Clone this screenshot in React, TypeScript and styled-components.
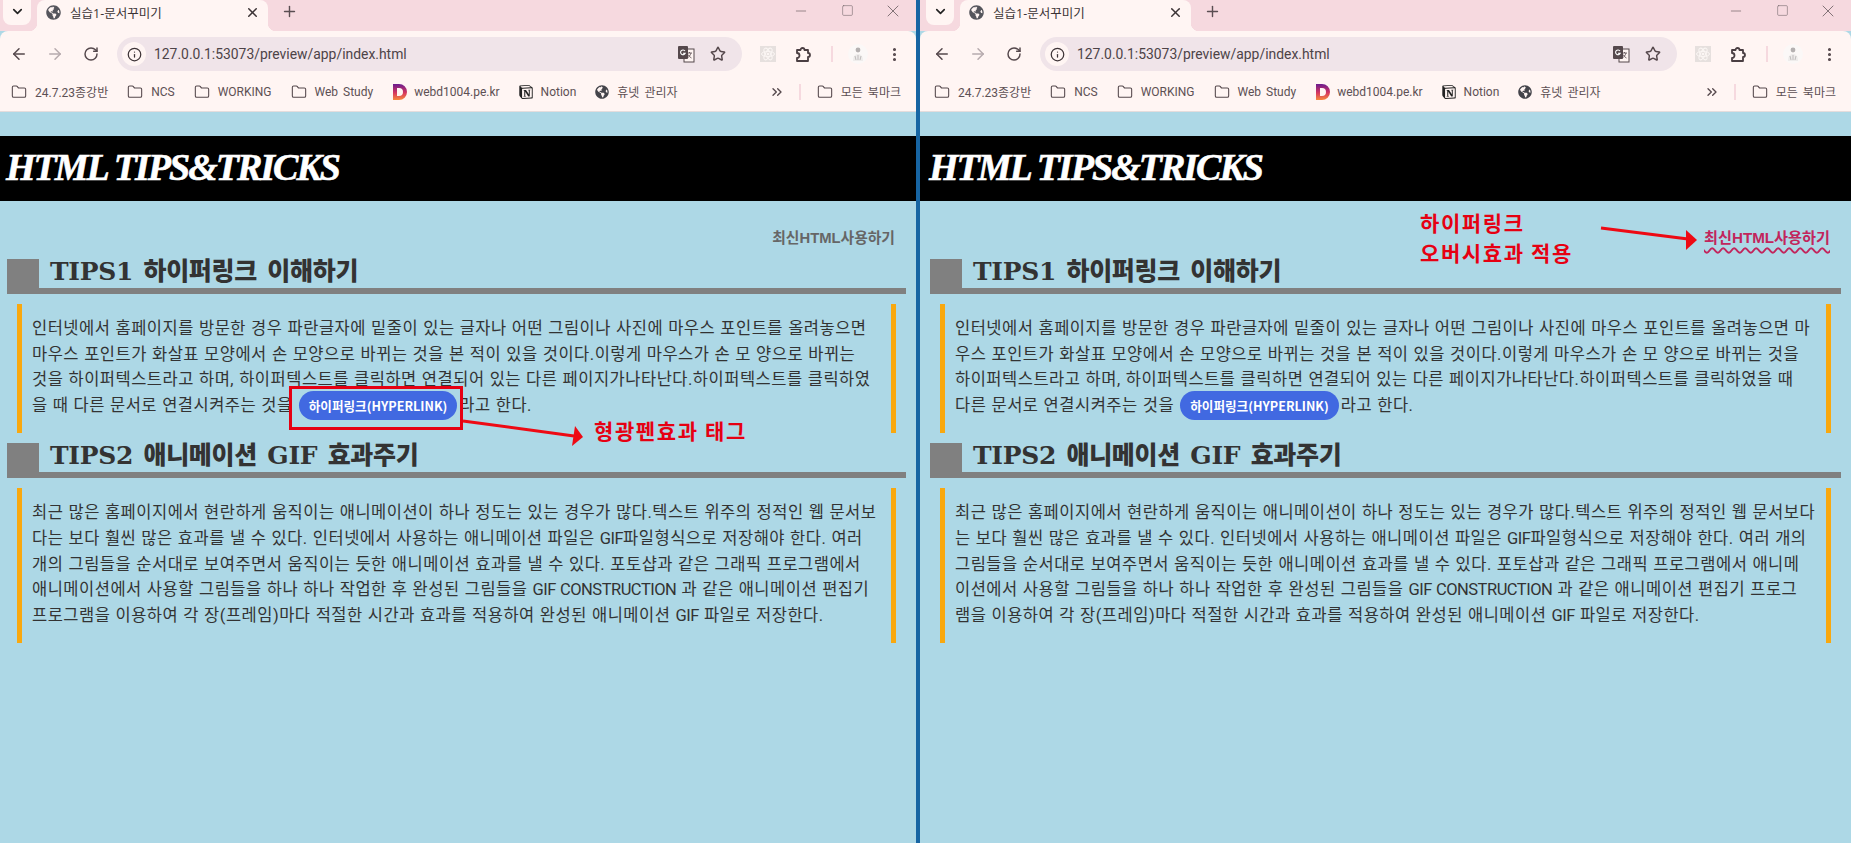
import React from "react";
import styled, { createGlobalStyle } from "styled-components";
import {
  ArrowLeft,
  ArrowRight,
  ChevronDown,
  ChevronsRight,
  EllipsisVertical,
  Folder,
  Info,
  Minus,
  Plus,
  RotateCw,
  Square,
  Star,
  X,
} from "lucide-react";
import { FaGlobeAmericas } from "react-icons/fa";
import { SiNotion } from "react-icons/si";

const GlobalStyle = createGlobalStyle`
  html, body {
    margin: 0;
    height: 100%;
    overflow: hidden;
  }
  #root {
    height: 100%;
  }
`;

const UI_FONT = `Roboto, "Noto Sans CJK KR", sans-serif`;
const BODY_FONT = `"Noto Sans CJK KR", "Noto Sans", sans-serif`;

const Screen = styled.div`
  display: flex;
  height: 843px;
  width: 1851px;
  background: #1765a3;
`;

const Window = styled.div<{ $width: number; $gapLeft?: number }>`
  position: relative;
  display: flex;
  flex-direction: column;
  width: ${({ $width }) => $width}px;
  margin-left: ${({ $gapLeft }) => $gapLeft ?? 0}px;
  background: #add8e6;
  overflow: hidden;
`;

const TabStrip = styled.div<{ $inset: number }>`
  display: flex;
  align-items: flex-start;
  height: 31px;
  padding-left: ${({ $inset }) => 3 + $inset}px;
  background: #f6d9df;
  color: #2f2a2c;
`;

const TabSearch = styled.div`
  display: flex;
  align-items: center;
  justify-content: center;
  width: 28px;
  height: 25px;
  padding-bottom: 2px;
  box-sizing: border-box;
  border-radius: 0 0 8px 8px;
  background: #fff5f3;
`;

const Tab = styled.div`
  position: relative;
  display: flex;
  align-items: center;
  width: 231px;
  height: 31px;
  margin-left: 6px;
  padding: 0 8px 7px 9px;
  box-sizing: border-box;
  border-radius: 8px 8px 0 0;
  background: #fff5f3;
  font: 12.5px "Open Sans", "Noto Sans CJK KR", sans-serif;
  color: #3b3335;

  &::before,
  &::after {
    content: "";
    position: absolute;
    bottom: 0;
    width: 8px;
    height: 8px;
  }
  &::before {
    left: -8px;
    background: radial-gradient(circle at 0 0, transparent 8px, #fff5f3 8.5px);
  }
  &::after {
    right: -8px;
    background: radial-gradient(circle at 100% 0, transparent 8px, #fff5f3 8.5px);
  }
`;

const TabGlobe = styled(FaGlobeAmericas)`
  width: 15px;
  height: 15px;
  color: #55555c;
  flex: none;
`;

const TabTitle = styled.span`
  margin-left: 9px;
  flex: 1;
  white-space: nowrap;
`;

const NewTab = styled.div`
  display: flex;
  margin: 3px 0 0 13px;
  color: #5a4e52;
`;

const WindowControls = styled.div`
  display: flex;
  margin-left: auto;
  height: 21px;
`;

const WindowButton = styled.div`
  display: flex;
  align-items: center;
  justify-content: center;
  width: 46px;
  color: #6b5e62;
`;

const Toolbar = styled.div<{ $inset: number }>`
  display: flex;
  align-items: center;
  height: 44px;
  box-sizing: border-box;
  padding: 2px 4px 0 ${({ $inset }) => 1 + $inset}px;
  background: #fff5f3;
  border-radius: 8px 8px 0 0;
  color: #55484c;
`;

const NavButton = styled.div<{ $muted?: boolean }>`
  display: flex;
  align-items: center;
  justify-content: center;
  width: 36px;
  flex: none;
  color: ${({ $muted }) => ($muted ? "#b7abae" : "#55484c")};
`;

const Omnibox = styled.div`
  display: flex;
  align-items: center;
  flex: 1;
  height: 34px;
  margin: 0 8px;
  padding: 0 8px 0 5px;
  border-radius: 17px;
  background: #f0e4e9;
`;

const SiteInfo = styled.div`
  display: flex;
  align-items: center;
  justify-content: center;
  width: 24px;
  height: 24px;
  border-radius: 50%;
  background: #fff5f3;
  color: #3e3437;
`;

const Url = styled.span`
  margin-left: 8px;
  flex: 1;
  font: 13.9px Roboto, sans-serif;
  color: #4d4347;
`;

const OmniIcon = styled.div`
  display: flex;
  align-items: center;
  justify-content: center;
  width: 32px;
`;

const ToolbarDivider = styled.div`
  width: 2px;
  height: 16px;
  margin: 0 7px 0 9px;
  background: #f6d9df;
`;

const Bookmarks = styled.div<{ $inset: number }>`
  display: flex;
  align-items: center;
  gap: 19px;
  height: 37px;
  box-sizing: border-box;
  padding: 0 15px 3px ${({ $inset }) => 11 + $inset}px;
  background: #fff5f3;
  border-bottom: 1px solid #e4dcdc;
  font: 12px ${UI_FONT};
  word-spacing: 2px;
  color: #5d5054;
`;

const Bookmark = styled.div<{ $tight?: boolean }>`
  display: flex;
  align-items: center;
  gap: ${({ $tight }) => ($tight ? 6 : 8)}px;
  white-space: nowrap;
`;

const OtherBookmarks = styled.div`
  display: flex;
  align-items: center;
  margin-left: auto;
`;

const BookmarkDivider = styled.div`
  width: 2px;
  height: 16px;
  margin: 0 16px 0 14px;
  background: #f6d9df;
`;

const TitleBar = styled.h1<{ $inset: number }>`
  margin: 24px 0 0;
  height: 65px;
  padding-left: ${({ $inset }) => 6 + $inset}px;
  background: #000;
  color: #fff;
  font: italic 700 38px/63px "Liberation Serif", serif;
  letter-spacing: -2px;
  -webkit-text-stroke: 0.6px #fff;
  white-space: nowrap;
`;

const Content = styled.div<{ $inset: number }>`
  display: flex;
  flex-direction: column;
  padding: 0 10px 0 ${({ $inset }) => 7 + $inset}px;
`;

const TopLink = styled.a<{ $hover?: boolean }>`
  align-self: flex-end;
  margin: 26px 11px 10px 0;
  font: 700 ${({ $hover }) => ($hover ? 15.2 : 14.8)}px/22px "Liberation Sans", ${BODY_FONT};
  color: ${({ $hover }) => ($hover ? "#c2255c" : "#666")};
  text-decoration: ${({ $hover }) => ($hover ? "underline wavy" : "none")};
  text-decoration-thickness: 1.8px;
  text-underline-offset: 4px;
`;

const SectionTitle = styled.h2`
  display: flex;
  align-items: flex-start;
  height: 29px;
  margin: 0;
  border-bottom: 6px solid #808080;
  font: 900 25px/25px "DejaVu Serif", ${BODY_FONT};
  letter-spacing: -0.3px;
  word-spacing: 2px;
  color: #333;
  white-space: nowrap;

  &::before {
    content: "";
    width: 32px;
    height: 29px;
    margin-right: 11px;
    background: #808080;
    flex: none;
  }
`;

const Paragraph = styled.p`
  margin: 10px 10px;
  padding: 12px 10px 15px;
  border-left: 5px solid #f9a80e;
  border-right: 5px solid #f9a80e;
  font: 400 16.5px/25.6px Roboto, ${BODY_FONT};
  letter-spacing: 0.5px;
  word-spacing: 0.5px;
  color: #333;
  white-space: nowrap;
`;

const Latin = styled.span`
  letter-spacing: -0.5px;
`;

const Pill = styled.span`
  margin: 0 2px 0 1px;
  padding: 5px 10px;
  border-radius: 15px;
  background: #4169e1;
  color: #fff;
  font: 700 12.6px/1 ${BODY_FONT};
  letter-spacing: 0;
`;

const Callout = styled.div<{ $x: number; $y: number }>`
  position: absolute;
  left: ${({ $x }) => $x}px;
  top: ${({ $y }) => $y}px;
  font: 700 21px/30px ${BODY_FONT};
  letter-spacing: 1.6px;
  color: #e60012;
  white-space: nowrap;
`;

const Highlight = styled.div`
  position: absolute;
  left: 289px;
  top: 386px;
  width: 168px;
  height: 38px;
  border: 3px solid #e60012;
`;

const ArrowSvg = styled.svg`
  position: absolute;
  left: 0;
  top: 0;
  pointer-events: none;
`;

const TranslateIcon = () => (
  <svg width="18" height="18" viewBox="0 0 18 18">
    <rect x="7" y="4" width="10" height="13" fill="#fff5f3" stroke="#55484c" strokeWidth="1" />
    <path d="M10 8h5M12.5 7v1M14 8c-.6 2.4-2 4-4 5M11 9.5c.8 1.6 2 2.8 3.5 3.5" fill="none" stroke="#55484c" strokeWidth="0.8" />
    <rect x="1" y="1" width="10" height="13" rx="1" fill="#55484c" />
    <path d="M8 6a2.4 2.4 0 1 0 .2 2.3H6" fill="none" stroke="#fff" strokeWidth="1.1" />
  </svg>
);

const AtomIcon = () => (
  <svg width="16" height="16" viewBox="0 0 16 16">
    <rect width="16" height="16" fill="#e6e0de" />
    <g fill="none" stroke="#fbf6f4" strokeWidth="1">
      <ellipse cx="8" cy="8" rx="6.5" ry="2.6" />
      <ellipse cx="8" cy="8" rx="6.5" ry="2.6" transform="rotate(60 8 8)" />
      <ellipse cx="8" cy="8" rx="6.5" ry="2.6" transform="rotate(120 8 8)" />
    </g>
    <circle cx="8" cy="8" r="1.3" fill="#fbf6f4" />
  </svg>
);

const PuzzleIcon = () => (
  <svg width="18" height="18" viewBox="0 0 18 18">
    <path
      d="M2 5h3.5a2 2 0 0 1 4 0H13v3a2 2 0 0 1 0 4v4H2v-3a2 2 0 0 0 0-5z"
      fill="none"
      stroke="#4a3e42"
      strokeWidth="1.8"
      strokeLinejoin="round"
    />
  </svg>
);

const AvatarIcon = () => (
  <svg width="20" height="20" viewBox="0 0 20 20">
    <circle cx="10" cy="10" r="10" fill="#fbf8f7" />
    <circle cx="10" cy="6" r="2.4" fill="#b4b0b0" />
    <path d="M5 17c0-5 2-7 5-7s5 2 5 7z" fill="#eeeceb" />
    <path d="M7 12l1 4M10 11v5M13 12l-1 4" stroke="#b4b0b0" strokeWidth="0.8" />
  </svg>
);

const DLogo = () => (
  <svg width="16" height="16" viewBox="0 0 16 16">
    <defs>
      <linearGradient id="dlogo" x1="0" y1="0" x2="0" y2="1">
        <stop offset="0" stopColor="#6a1b8f" />
        <stop offset="0.55" stopColor="#d6365f" />
        <stop offset="1" stopColor="#f68a3c" />
      </linearGradient>
    </defs>
    <path fillRule="evenodd" d="M1 0h6a8 8 0 0 1 0 16H1zM5 4v8h2a4 4 0 0 0 0-8z" fill="url(#dlogo)" />
  </svg>
);

const FolderIcon = () => <Folder size={16} strokeWidth={1.6} color="#55484c" />;

const BookmarkBar: React.FC<{ inset: number }> = ({ inset }) => (
  <Bookmarks $inset={inset}>
    <Bookmark><FolderIcon />24.7.23종강반</Bookmark>
    <Bookmark><FolderIcon />NCS</Bookmark>
    <Bookmark><FolderIcon />WORKING</Bookmark>
    <Bookmark><FolderIcon />Web Study</Bookmark>
    <Bookmark $tight><DLogo />webd1004.pe.kr</Bookmark>
    <Bookmark><SiNotion size={14} color="#222" />Notion</Bookmark>
    <Bookmark><FaGlobeAmericas size={14} color="#44444a" />휴넷 관리자</Bookmark>
    <OtherBookmarks>
      <ChevronsRight size={16} color="#55484c" />
      <BookmarkDivider />
      <Bookmark><FolderIcon />모든 북마크</Bookmark>
    </OtherBookmarks>
  </Bookmarks>
);

const BrowserFrame: React.FC<{ inset: number }> = ({ inset }) => (
  <>
    <TabStrip $inset={inset}>
      <TabSearch><ChevronDown size={15} strokeWidth={2.6} color="#222" /></TabSearch>
      <Tab>
        <TabGlobe />
        <TabTitle>실습1-문서꾸미기</TabTitle>
        <X size={15} strokeWidth={2.4} color="#3b3335" />
      </Tab>
      <NewTab><Plus size={17} strokeWidth={2} /></NewTab>
      <WindowControls>
        <WindowButton><Minus size={16} strokeWidth={1} /></WindowButton>
        <WindowButton><Square size={13} strokeWidth={1} /></WindowButton>
        <WindowButton><X size={20} strokeWidth={1} /></WindowButton>
      </WindowControls>
    </TabStrip>
    <Toolbar $inset={inset}>
      <NavButton><ArrowLeft size={18} /></NavButton>
      <NavButton $muted><ArrowRight size={18} /></NavButton>
      <NavButton><RotateCw size={16} strokeWidth={2.2} /></NavButton>
      <Omnibox>
        <SiteInfo><Info size={15} strokeWidth={2} /></SiteInfo>
        <Url>127.0.0.1:53073/preview/app/index.html</Url>
        <OmniIcon><TranslateIcon /></OmniIcon>
        <OmniIcon><Star size={16} strokeWidth={2.2} /></OmniIcon>
      </Omnibox>
      <NavButton><AtomIcon /></NavButton>
      <NavButton><PuzzleIcon /></NavButton>
      <ToolbarDivider />
      <NavButton><AvatarIcon /></NavButton>
      <NavButton><EllipsisVertical size={17} strokeWidth={2.4} /></NavButton>
    </Toolbar>
    <BookmarkBar inset={inset} />
  </>
);

const HYPERLINK = "하이퍼링크(HYPERLINK)";

const LEFT_TIP1 = [
  "인터넷에서 홈페이지를 방문한 경우 파란글자에 밑줄이 있는 글자나 어떤 그림이나 사진에 마우스 포인트를 올려놓으면",
  "마우스 포인트가 화살표 모양에서 손 모양으로 바뀌는 것을 본 적이 있을 것이다.이렇게 마우스가 손 모 양으로 바뀌는",
  "것을 하이퍼텍스트라고 하며, 하이퍼텍스트를 클릭하면 연결되어 있는 다른 페이지가나타난다.하이퍼텍스트를 클릭하였",
];
const LEFT_TIP1_END = "을 때 다른 문서로 연결시켜주는 것을 ";

const RIGHT_TIP1 = [
  "인터넷에서 홈페이지를 방문한 경우 파란글자에 밑줄이 있는 글자나 어떤 그림이나 사진에 마우스 포인트를 올려놓으면 마",
  "우스 포인트가 화살표 모양에서 손 모양으로 바뀌는 것을 본 적이 있을 것이다.이렇게 마우스가 손 모 양으로 바뀌는 것을",
  "하이퍼텍스트라고 하며, 하이퍼텍스트를 클릭하면 연결되어 있는 다른 페이지가나타난다.하이퍼텍스트를 클릭하였을 때",
];
const RIGHT_TIP1_END = "다른 문서로 연결시켜주는 것을 ";

const LEFT_TIP2 = [
  "최근 많은 홈페이지에서 현란하게 움직이는 애니메이션이 하나 정도는 있는 경우가 많다.텍스트 위주의 정적인 웹 문서보",
  "다는 보다 훨씬 많은 효과를 낼 수 있다. 인터넷에서 사용하는 애니메이션 파일은 GIF파일형식으로 저장해야 한다. 여러",
  "개의 그림들을 순서대로 보여주면서 움직이는 듯한 애니메이션 효과를 낼 수 있다. 포토샵과 같은 그래픽 프로그램에서",
  "애니메이션에서 사용할 그림들을 하나 하나 작업한 후 완성된 그림들을 GIF CONSTRUCTION 과 같은 애니메이션 편집기",
  "프로그램을 이용하여 각 장(프레임)마다 적절한 시간과 효과를 적용하여 완성된 애니메이션 GIF 파일로 저장한다.",
];

const RIGHT_TIP2 = [
  "최근 많은 홈페이지에서 현란하게 움직이는 애니메이션이 하나 정도는 있는 경우가 많다.텍스트 위주의 정적인 웹 문서보다",
  "는 보다 훨씬 많은 효과를 낼 수 있다. 인터넷에서 사용하는 애니메이션 파일은 GIF파일형식으로 저장해야 한다. 여러 개의",
  "그림들을 순서대로 보여주면서 움직이는 듯한 애니메이션 효과를 낼 수 있다. 포토샵과 같은 그래픽 프로그램에서 애니메",
  "이션에서 사용할 그림들을 하나 하나 작업한 후 완성된 그림들을 GIF CONSTRUCTION 과 같은 애니메이션 편집기 프로그",
  "램을 이용하여 각 장(프레임)마다 적절한 시간과 효과를 적용하여 완성된 애니메이션 GIF 파일로 저장한다.",
];

// the latin words sit tighter than the hangul around them
const LineText: React.FC<{ text: string }> = ({ text }) => (
  <>
    {text.split(/(GIF(?: CONSTRUCTION)?)/).map((part, i) =>
      i % 2 === 1 ? <Latin key={i}>{part}</Latin> : part
    )}
  </>
);

const Lines: React.FC<{ lines: string[] }> = ({ lines }) => (
  <>
    {lines.map((line) => (
      <React.Fragment key={line}>
        <LineText text={line} />
        <br />
      </React.Fragment>
    ))}
  </>
);

interface PageProps {
  inset: number;
  hover?: boolean;
  tip1: string[];
  tip1End: string;
  tip2: string[];
}

const Page: React.FC<PageProps> = ({ inset, hover, tip1, tip1End, tip2 }) => (
  <>
    <TitleBar $inset={inset}>HTML TIPS&amp;TRICKS</TitleBar>
    <Content $inset={inset}>
      <TopLink $hover={hover}>최신HTML사용하기</TopLink>
      <SectionTitle>TIPS1 하이퍼링크 이해하기</SectionTitle>
      <Paragraph>
        <Lines lines={tip1} />
        {tip1End}
        <Pill>{HYPERLINK}</Pill>
        라고 한다.
      </Paragraph>
      <SectionTitle>TIPS2 애니메이션 GIF 효과주기</SectionTitle>
      <Paragraph>
        <Lines lines={tip2} />
      </Paragraph>
    </Content>
  </>
);

const App: React.FC = () => {
  return (
    <Screen>
      <GlobalStyle />
      <Window $width={916}>
        <BrowserFrame inset={0} />
        <Page inset={0} tip1={LEFT_TIP1} tip1End={LEFT_TIP1_END} tip2={LEFT_TIP2} />
        <Highlight />
        <ArrowSvg width="916" height="843">
          <path d="M463 421L574 436" stroke="#ee0a14" strokeWidth="3" fill="none" />
          <polygon points="583,437 575,426 572,446" fill="#ee0a14" />
        </ArrowSvg>
        <Callout $x={594} $y={415}>형광펜효과 태그</Callout>
      </Window>
      <Window $width={931} $gapLeft={4}>
        <BrowserFrame inset={3} />
        <Page inset={3} hover tip1={RIGHT_TIP1} tip1End={RIGHT_TIP1_END} tip2={RIGHT_TIP2} />
        <ArrowSvg width="931" height="843">
          <path d="M681 228L768 239" stroke="#ee0a14" strokeWidth="3" fill="none" />
          <polygon points="777,240 766,230 766,250" fill="#ee0a14" />
        </ArrowSvg>
        <Callout $x={500} $y={207}>
          하이퍼링크
          <br />
          오버시효과 적용
        </Callout>
      </Window>
    </Screen>
  );
};

export default App;
